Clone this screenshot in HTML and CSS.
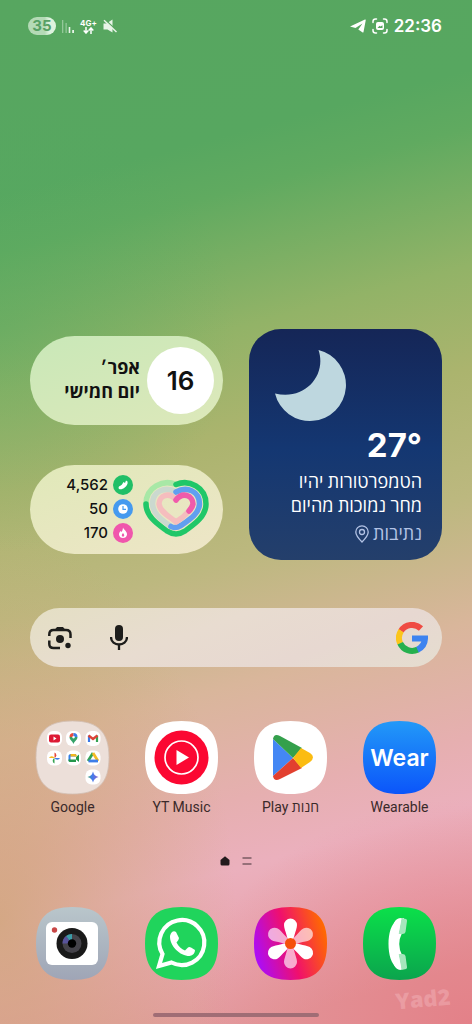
FILE: index.html
```html
<!DOCTYPE html>
<html lang="he" dir="rtl">
<head>
    <meta charset="UTF-8">
    <meta name="viewport" content="width=device-width, initial-scale=1.0">
    <title>מסך הבית</title>
    <link rel="stylesheet" href="styles.css">
</head>
<body>
<!-- Shared shapes -->
<svg class="defs" width="0" height="0" aria-hidden="true">
    <defs>
        <path id="squircle" d="M36.5 0C62 0 73 11 73 36.5S62 73 36.5 73 0 62 0 36.5 11 0 36.5 0Z"/>
        <linearGradient id="wear-bg" x1="0" y1="0" x2="0" y2="1">
            <stop offset="0" stop-color="#2299f8"/><stop offset="1" stop-color="#0b55fa"/>
        </linearGradient>
        <linearGradient id="camera-bg" x1="0" y1="0" x2="0" y2="1">
            <stop offset="0" stop-color="#b9c6cb"/><stop offset="1" stop-color="#9fa5b6"/>
        </linearGradient>
        <linearGradient id="phone-bg" x1="0" y1="0" x2="0" y2="1">
            <stop offset="0" stop-color="#0be04a"/><stop offset="1" stop-color="#0ba44d"/>
        </linearGradient>
        <linearGradient id="gallery-bg" x1="0" y1="0.7" x2="1" y2="0.4">
            <stop offset="0" stop-color="#a80cff"/><stop offset="0.5" stop-color="#f0106c"/><stop offset="1" stop-color="#ff6a00"/>
        </linearGradient>
        <linearGradient id="gemini" x1="0" y1="0" x2="1" y2="0">
            <stop offset="0" stop-color="#4aa564"/><stop offset="0.4" stop-color="#3e7cf0"/><stop offset="1" stop-color="#8a62c8"/>
        </linearGradient>
    </defs>
</svg>

<div class="phone">
    <header class="status-bar">
        <div class="status-group">
            <time class="clock">22:36</time>
            <svg width="16" height="16" viewBox="0 0 16 16" fill="none" stroke="#fff" stroke-width="1.5" stroke-linecap="round">
                <path d="M1 4.500V3.500Q1 1 3.500 1H4.500M11.500 1H12.500Q15 1 15 3.500V4.500M15 11.500V12.500Q15 15 12.500 15H11.500M4.500 15H3.500Q1 15 1 12.500V11.500"/>
                <rect x="4" y="4" width="8" height="8" rx="2" fill="#fff" stroke="none"/>
                <path d="M5.500 10 7.500 7.800 8.500 8.600 10.500 7.200V10Z" fill="#57a65f" stroke="none"/>
            </svg>
            <svg width="16" height="14" viewBox="0 0 16 14"><path d="M0 7.500 15 0.500Q16 0.300 15.700 1.500L13.500 13Q13.300 14 12.300 13.300L8.300 10.500 12.500 4.500 5.500 9Z" fill="#fff"/></svg>
        </div>
        <div class="status-group">
            <svg width="14" height="14" viewBox="0 0 14 14"><path d="M0.500 4.500H3.500L9.500 0.500V13.500L4.500 10.500H0.500Z" fill="#e8f4e8"/><path d="M2 0.500 14 12" stroke="#57a65f" stroke-width="1.300"/><path d="M1 1.300 13.500 13" stroke="#e8f4e8" stroke-width="1.500"/></svg>
            <div class="network">
                <span>4G+</span>
                <svg width="11" height="7" viewBox="0 0 11 7" fill="none" stroke="#fff" stroke-width="1.500"><path d="M3 0V6M0.700 3.500 3 6 5.300 3.500M8 7V1M5.700 3.500 8 1 10.300 3.500"/></svg>
            </div>
            <svg width="12" height="13" viewBox="0 0 12 13"><path d="M0 0H1.300V13H0ZM3.500 3H4.800V13H3.500Z" fill="#94c899"/><path d="M6.700 7H8.300V13H6.700ZM10.200 10H12V13H10.200Z" fill="#e8f4e8"/></svg>
            <span class="battery">35</span>
        </div>
    </header>

    <main class="home">
        <section class="widgets">
            <article class="weather">
                <svg class="moon" width="72" height="72" viewBox="0 0 72 72"><path d="M43.500 0A36 36 0 1 1 0 43.500C30 51 52 25 43.500 0Z" fill="#bed7df"/></svg>
                <strong class="temperature">27°</strong>
                <p class="forecast">הטמפרטורות יהיו<br>מחר נמוכות מהיום</p>
                <p class="place">נתיבות
                    <svg width="14" height="18" viewBox="0 0 14 18" fill="none" stroke="#b3c3e5" stroke-width="1.300"><path d="M7 17C3.500 13.500 0.800 10.500 0.800 7A6.200 6.200 0 0 1 13.200 7C13.200 10.500 10.500 13.500 7 17Z"/><circle cx="7" cy="7" r="2.500"/></svg>
                </p>
            </article>

            <div class="pills">
                <article class="pill date">
                    <span class="day">16</span>
                    <p class="date-text">אפר׳<br>יום חמישי</p>
                </article>
                <article class="pill health">
                    <svg class="heart" width="66" height="60" viewBox="0 0 66 60" fill="none" stroke-linecap="round" stroke-linejoin="round">
                        <path d="M33 5.500C20 0 3 8 3 25" stroke="#a8e8a6" stroke-width="5.500"/>
                        <path d="M33 5.500C46 0 63 8 63 25C63 38 50 46 42 52Q33 58 24 52C16 46 3 38 3 25" stroke="#20c768" stroke-width="5.500"/>
                        <path d="M33 13C22 7 9.500 12 9.500 25C10 35 19 41 27 47" stroke="#cbd9cf" stroke-width="5.500"/>
                        <path d="M33 13C44 7 56.500 12 56.500 25C56 35 46 41 38 46.500Q32 50 28 47.500" stroke="#619ff0" stroke-width="5.500"/>
                        <path d="M33 21C26 12 16 17 16 25C17 33 26 37 33 43Q40 39 46 32" stroke="#f5bdbe" stroke-width="5.500"/>
                        <path d="M33 21C40 12 50 17 50 25Q49 29 46 32" stroke="#f05bab" stroke-width="5.500"/>
                    </svg>
                    <ul class="stats">
                        <li>
                            <svg width="20" height="20" viewBox="0 0 20 20"><circle cx="10" cy="10" r="10" fill="#20bf67"/><path d="M5.500 13C5.500 11 7.500 11 9 9.500L10.500 7 12 8 13 5.500 14.500 6.500C15.200 9 13.500 11 12 12.200C9.500 14.500 6 15.200 5.500 13Z" fill="#fff"/></svg>
                            <span>4,562</span>
                        </li>
                        <li>
                            <svg width="20" height="20" viewBox="0 0 20 20"><circle cx="10" cy="10" r="10" fill="#459aef"/><circle cx="10" cy="10" r="4.800" fill="#fff"/><path d="M10 7V10.300H13" fill="none" stroke="#459aef" stroke-width="1.200"/></svg>
                            <span>50</span>
                        </li>
                        <li>
                            <svg width="20" height="20" viewBox="0 0 20 20"><circle cx="10" cy="10" r="10" fill="#f056ac"/><path d="M10 4.500C11 7 14.300 8.500 14 11.500C13.700 16.300 6.300 16.300 6 11.500C6 10 6.800 9 7.500 8L8.500 9C9.500 8 9.800 6 10 4.500Z" fill="#fff"/><path d="M10 10Q12.500 13 10 13.800 7.500 13 10 10Z" fill="#f056ac"/></svg>
                            <span>170</span>
                        </li>
                    </ul>
                </article>
            </div>
        </section>

        <form class="search" role="search">
            <svg width="32" height="32" viewBox="0 0 32 32" fill="none" stroke-width="6">
                <path d="M5 9A13 13 0 0 1 25 6.500" stroke="#ef4b43"/>
                <path d="M5.200 8.700A13 13 0 0 0 4.200 21.500" stroke="#fbc51b"/>
                <path d="M4.200 21.200A13 13 0 0 0 22 27.500" stroke="#25b04e"/>
                <path d="M21.500 27.700A13 13 0 0 0 29 16.500H16" stroke="#3d83f0"/>
            </svg>
            <input class="search-input" type="search" aria-label="חיפוש">
            <button class="tool" type="button" aria-label="חיפוש קולי">
                <svg width="18" height="26" viewBox="0 0 18 26"><rect x="5" y="0" width="8" height="16" rx="4" fill="#1d1d1b"/><path d="M1 12C1 22 17 22 17 12M9 19.500V25" fill="none" stroke="#1d1d1b" stroke-width="2.300"/></svg>
            </button>
            <button class="tool" type="button" aria-label="Google Lens">
                <svg width="24" height="24" viewBox="0 0 24 24"><path d="M1.300 10V8.500Q1.300 4 5.500 4H18Q22.500 4 22.500 8.500V12M1.300 14.500V18Q1.300 22 5.500 22H12" fill="none" stroke="#1d1d1b" stroke-width="2.500"/><path d="M6.500 4 9 1H15L17.500 4Z" fill="#1d1d1b"/><circle cx="12" cy="13" r="4" fill="#1d1d1b"/><circle cx="20" cy="19.500" r="2.700" fill="#1d1d1b"/></svg>
            </button>
        </form>

        <nav class="apps">
            <a class="app" href="#wearable">
                <svg class="icon" viewBox="0 0 73 73"><use href="#squircle" fill="url(#wear-bg)"/><text class="wear-logo" x="36.500" y="45" text-anchor="middle">Wear</text></svg>
                <span>Wearable</span>
            </a>
            <a class="app" href="#play">
                <svg class="icon" viewBox="0 0 73 73"><use href="#squircle" fill="#fff"/>
                    <path d="M19 18V55L39 37Z" fill="#4487f4"/>
                    <path d="M19 18Q20 12 26 15L48 27 39 37 19 18Z" fill="#34a04c"/>
                    <path d="M19 55Q20 61 26 58L48 47 39 37Z" fill="#e2402f"/>
                    <path d="M47 27 56 32Q62 36 56 41L47 47 39 37Z" fill="#fbbc12"/>
                </svg>
                <span>חנות Play</span>
            </a>
            <a class="app" href="#yt-music">
                <svg class="icon" viewBox="0 0 73 73"><use href="#squircle" fill="#fff"/><circle cx="36.500" cy="36.500" r="27" fill="#fb0832"/><circle cx="36.500" cy="36.500" r="16.500" fill="none" stroke="#fff" stroke-width="1.700"/><path d="M31.500 29V44L44 36.500Z" fill="#fff"/></svg>
                <span>YT Music</span>
            </a>
            <a class="app" href="#google">
                <svg class="icon" viewBox="0 0 73 73"><use href="#squircle" fill="#ecdfd9" stroke="#d2bfb4" stroke-width="0.800"/>
                    <g fill="#fff"><rect x="11" y="10" width="15" height="15" rx="6"/><rect x="30" y="10" width="15" height="15" rx="6"/><rect x="49.500" y="10" width="15" height="15" rx="6"/><rect x="11" y="29.500" width="15" height="15" rx="6"/><rect x="30" y="29.500" width="15" height="15" rx="6"/><rect x="49.500" y="29.500" width="15" height="15" rx="6"/><rect x="49.500" y="48.500" width="15" height="15" rx="6"/></g>
                    <rect x="13" y="13.500" width="11" height="8" rx="2" fill="#dd1a35"/><path d="M17.500 15.500V19.500L20.500 17.500Z" fill="#fff"/>
                    <path d="M33.500 16A4 4 0 0 1 37.500 12V15A1.500 1.500 0 0 0 36 16.500Z" fill="#e74b3c"/><path d="M37.500 12A4 4 0 0 1 41.500 16H39A1.500 1.500 0 0 0 37.500 15Z" fill="#3d7de8"/><path d="M33.500 16H36Q37.500 19 39 16H41.500C41.500 19 38.500 20 37.500 23C36.500 20 33.500 19 33.500 16Z" fill="#34a268"/>
                    <path d="M53 21V14.500" stroke="#3b78e7" stroke-width="2.200"/><path d="M61 21V14.500" stroke="#36a352" stroke-width="2.200"/><path d="M52.500 14.500 57 18 61.500 14.500" fill="none" stroke="#dc4438" stroke-width="2.500"/>
                    <path d="M18.500 37V31.500A3 3 0 0 1 18.500 37Z" fill="#e5473a"/><path d="M18.500 37H24A3 3 0 0 1 18.500 37Z" fill="#3d7de8"/><path d="M18.500 37V42.500A3 3 0 0 1 18.500 37Z" fill="#36a352"/><path d="M18.500 37H13A3 3 0 0 1 18.500 37Z" fill="#f6b81d"/>
                    <path d="M34 33H40V35.500H34.500V40H32.500V34.500Z" fill="#347de5"/><path d="M32.500 38.500H40V41H34Q32.500 41 32.500 39.500ZM40 36 43 33.500V41L40 38.500Z" fill="#23974b"/><path d="M34.500 33H39Q41 33 41 35.500H34.500Z" fill="#f4b81f"/>
                    <path d="M57 32 52 40" stroke="#36a352" stroke-width="2.800"/><path d="M57 32 62 40" stroke="#f5bb25" stroke-width="2.800"/><path d="M52.500 40H62" stroke="#3d7de8" stroke-width="2.800"/>
                    <path d="M57 50.500Q58 55 62.500 56 58 57 57 61.500 56 57 51.500 56 56 55 57 50.500Z" fill="url(#gemini)"/>
                </svg>
                <span>Google</span>
            </a>
        </nav>

        <div class="pages">
            <svg width="10" height="10" viewBox="0 0 10 10"><path d="M5 0.300 9.500 4V8Q9.500 9.500 8 9.500H2Q0.500 9.500 0.500 8V4Z" fill="#231b1d"/></svg>
            <svg width="10" height="10" viewBox="0 0 10 10"><path d="M0.500 2H9.500M0.500 8H9.500" stroke="#7b5b63" stroke-width="1.500"/></svg>
        </div>

        <nav class="apps">
            <a class="app" href="#phone" aria-label="טלפון">
                <svg class="icon" viewBox="0 0 73 73"><use href="#squircle" fill="url(#phone-bg)"/>
                    <path d="M35 12.500C28 16 25.500 27 25.500 37S28 58 35 61.500L41 62 39 48Q33.500 37 39 26L41 11Z" fill="#fff"/>
                    <path d="M38.500 11 43 12Q44.300 12.500 44 14L42.500 25Q42 27 39.500 27H35.500ZM38.500 63 43 62Q44.300 61.500 44 60L42.500 49Q42 47 39.500 47H35.500Z" fill="#a6e6bd"/>
                    <path d="M38.500 11 35.500 27Q34 37 35.500 47L38.500 63Q33 63 31 58V16Q33 11 38.500 11Z" fill="#fff"/>
                </svg>
            </a>
            <a class="app" href="#gallery" aria-label="גלריה">
                <svg class="icon" viewBox="0 0 73 73"><use href="#squircle" fill="url(#gallery-bg)"/>
                    <defs><path id="petal" d="M36.500 33C34 33 33 31 32.500 28C31.500 24 30 21 30 18A6.500 6.500 0 0 1 43 18C43 21 41.500 24 40.500 28C40 31 39 33 36.500 33Z"/></defs>
                    <g fill="#fff"><use href="#petal"/><use href="#petal" transform="rotate(120 36.500 36.500)"/><use href="#petal" transform="rotate(240 36.500 36.500)"/></g>
                    <g fill="#fff" opacity="0.650"><use href="#petal" transform="rotate(60 36.500 36.500)"/><use href="#petal" transform="rotate(180 36.500 36.500)"/><use href="#petal" transform="rotate(300 36.500 36.500)"/></g>
                    <circle cx="36.500" cy="36.500" r="5.500" fill="#f5500a"/>
                </svg>
            </a>
            <a class="app" href="#whatsapp" aria-label="WhatsApp">
                <svg class="icon" viewBox="0 0 73 73"><use href="#squircle" fill="#20d45c"/>
                    <path d="M14 59 17.500 47A22.500 22.500 0 1 1 26.500 55.500Z" fill="none" stroke="#fff" stroke-width="4.200"/>
                    <path d="M27 25Q29 23.500 31 25L34 31Q34 32.500 31.500 35.500C33.500 39.500 36.500 42 40 43.500L43 40.500Q44 39.500 46 40.500L50 43Q50 48 44.500 49C35 49 24.500 39 25 29Q25.500 26.500 27 25Z" fill="#fff"/>
                </svg>
            </a>
            <a class="app" href="#camera" aria-label="מצלמה">
                <svg class="icon" viewBox="0 0 73 73"><use href="#squircle" fill="url(#camera-bg)"/><rect x="10" y="15" width="52" height="43" rx="6" fill="#fff"/><circle cx="18.500" cy="23" r="2.700" fill="#c94747"/><circle cx="36" cy="36.500" r="15.500" fill="#191919"/><circle cx="36" cy="36.500" r="9.500" fill="#45434a"/><path d="M36 36.500H26.500A9.500 9.500 0 0 1 30 29Z" fill="#58539a"/><path d="M36 36.500 30 29A9.500 9.500 0 0 1 36 27Z" fill="#3c9da8"/><circle cx="36" cy="36.500" r="4.200" fill="#000"/></svg>
            </a>
        </nav>

        <div class="home-bar"></div>
    </main>
    <span class="watermark">Yad2</span>
</div>
</body>
</html>
```
FILE: styles.css
```css
:root {
    --font-main: Roboto, 'Open Sans', sans-serif;
    --font-numbers: Inter, 'Open Sans', sans-serif;
    --icon-size: 73px;
}

* {
    box-sizing: border-box;
}

body {
    margin: 0;
    font-family: var(--font-main);
    color: #111;
}

p, ul {
    margin: 0;
    padding: 0;
}

svg {
    display: block;
    flex: none;
}

.defs {
    position: absolute;
}

/* Wallpaper: green at the top, sand in the middle, pink below */
.phone {
    position: relative;
    display: flex;
    flex-direction: column;
    min-height: 100vh;
    overflow: hidden;
    background:
        radial-gradient(ellipse 60% 22% at 100% 100%, rgba(228, 118, 128, 0.7), transparent),
        radial-gradient(ellipse 50% 38% at 0 90%, rgba(205, 165, 115, 0.75), transparent),
        radial-gradient(ellipse 50% 22% at 0 32%, rgba(85, 170, 97, 0.4), transparent),
        linear-gradient(165deg, #57a660 0%, #57a760 17%, #60aa60 22%, #92b367 34%, #abb46e 43%, #bcb87f 54%, #d9b69b 65%, #e6afb0 75%, #ebb0bd 81%, #e8a4ae 88%, #e29a9c 95%);
}

/* Status bar */
.status-bar {
    display: flex;
    align-items: center;
    justify-content: space-between;
    padding: 14px 30px 0 28px;
    color: #fff;
}

.status-group {
    display: flex;
    align-items: center;
    gap: 6px;
    height: 24px;
}

.clock {
    font: 600 17px var(--font-numbers);
}

.battery {
    width: 28px;
    border-radius: 9px;
    background: linear-gradient(90deg, #b4dab6 60%, #def2de 75%);
    color: #57a065;
    font: 700 15px/18px var(--font-numbers);
    text-align: center;
}

.network {
    display: flex;
    flex-direction: column;
    align-items: center;
    direction: ltr;
    font: 700 8px/8px var(--font-numbers);
}

/* Everything under the status bar sits at the bottom of the screen */
.home {
    flex: 1;
    display: flex;
    flex-direction: column;
    justify-content: flex-end;
    padding-bottom: 7px;
}

/* Widgets */
.widgets {
    display: grid;
    grid-template-columns: 1fr 1fr;
    align-items: center;
    gap: 26px;
    margin: 0 30px 48px;
}

.weather {
    padding: 21px 20px 12px;
    border-radius: 32px;
    background: linear-gradient(#152657, #143772 52%, #243f6b);
    color: #fff;
}

.moon {
    margin-right: 75px;
}

.temperature {
    display: block;
    margin-top: 4px;
    font: 700 33px/38px var(--font-numbers);
}

.forecast {
    margin-top: 6px;
    font: 400 18px/24px var(--font-main);
}

.place {
    display: flex;
    align-items: center;
    gap: 4px;
    margin-top: 2px;
    color: #b3c3e5;
    font: 400 18px/28px var(--font-main);
}

.pills {
    display: flex;
    flex-direction: column;
    gap: 40px;
}

.pill {
    display: flex;
    align-items: center;
    height: 89px;
    border-radius: 45px;
}

.date {
    gap: 7px;
    padding-right: 9px;
    background: linear-gradient(160deg, #c9e8b8, #dde8ba);
}

.day {
    width: 67px;
    border-radius: 50%;
    background: #fff;
    font: 600 26px/67px var(--font-numbers);
    text-align: center;
}

.date-text {
    font: 700 18px/24px var(--font-main);
}

.health {
    gap: 10px;
    padding-right: 14px;
    background: linear-gradient(160deg, #e0e9b9, #eee5c7);
}

.stats {
    display: grid;
    gap: 4px;
    list-style: none;
    font: 500 15px/20px var(--font-numbers);
}

.stats li {
    display: flex;
    gap: 5px;
}

/* Search */
.search {
    display: flex;
    align-items: center;
    height: 59px;
    margin: 0 30px 54px;
    padding: 0 14px 0 18px;
    border-radius: 30px;
    background: linear-gradient(160deg, #e4dfc4, #e8dcd0 40%, #e7d8d1 70%, #e5ddcf);
}

.search-input {
    flex: 1;
    min-width: 0;
    border: 0;
    outline: 0;
    background: none;
    font: 400 17px var(--font-main);
}

.tool {
    display: grid;
    place-items: center;
    width: 24px;
    height: 28px;
    padding: 0;
    border: 0;
    background: none;
}

.tool + .tool {
    margin-right: 35px;
}

/* App grid and dock */
.apps {
    display: grid;
    grid-template-columns: repeat(4, 1fr);
    margin: 0 18px;
}

.app {
    display: flex;
    flex-direction: column;
    align-items: center;
    gap: 4px;
    color: #3a2a2a;
    font: 400 14px/18px var(--font-main);
    text-decoration: none;
}

.icon {
    width: var(--icon-size);
    height: var(--icon-size);
    overflow: visible;
}

.wear-logo {
    fill: #fff;
    font: 600 23px var(--font-numbers);
    direction: ltr;
}

.pages {
    display: flex;
    direction: ltr;
    justify-content: center;
    gap: 12px;
    margin: 40px 0 41px;
}

.home-bar {
    align-self: center;
    width: 35%;
    height: 4px;
    margin-top: 33px;
    border-radius: 2px;
    background: #a06d75;
}

.watermark {
    position: absolute;
    right: 22px;
    bottom: 8px;
    color: rgba(255, 220, 225, 0.25);
    font: 800 22px/36px 'Open Sans', sans-serif;
    transform: rotate(-5deg);
}
```
